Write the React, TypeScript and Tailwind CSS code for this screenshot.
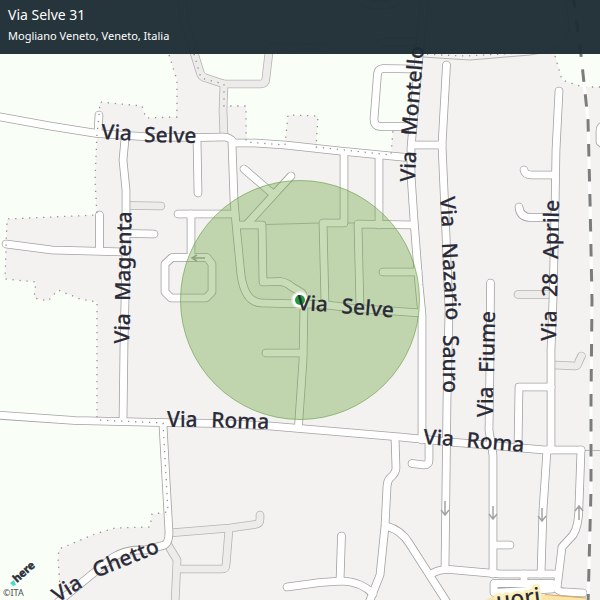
const STREETS: string[] = [
  "M-5 116L50 126L97 133.500L150 137L200 137.500L224 137Q230 137 234 143L255 143L285 145L340 151L412 158",
  "M125 139L123 160L126 190L126 250L125 300L124 345L123 421",
  "M99 115L98 133",
  "M197 138L198 193",
  "M6 244L52 250L125 252",
  "M99.500 215V250",
  "M130 233.500L154 234",
  "M178 214H235",
  "M191 214V257",
  "M191 257.500H172L165 264V292L171 298H206L212 292V264L207 257.500Z",
  "M232 143L234 200L236 224L241 275Q245 303 262 303L304 304Q325 304 350 308L421 313",
  "M244 169L273 194",
  "M291 176L248 223",
  "M238 225H262L263 282L280 281.500Q286 282 292 287L302 293Q304 296 304 304",
  "M344 153V223H323L325 304",
  "M379 157V225",
  "M414 225L358 224L360 309",
  "M383 272H418",
  "M424.500 0L420 45L411 148V175L414 220L419 285L422 315V440",
  "M446.500 65L442 145L446 235L449 310L447 400L445 569",
  "M414 145H442",
  "M414 69L383 68.500Q378 69 377.500 74L374 119Q374 126 380 126.500H413",
  "M559 91L556 150L555 210L553 300L551 350V450",
  "M524 170Q525 175 532 175H555",
  "M519 207Q520 217 530 217.500H555",
  "M551 387H519L518 447",
  "M490.500 283L490 360L489 430L493 455V574",
  "M-5 415L75 420.500L160 422.500L220 423.500L270 426L400 437L450 442L545 450H581",
  "M581 450L579 505Q579 526 573 535L562 547L557 588Q558 592 566 592L583 593",
  "M547 450L543 510L541 574",
  "M433 573Q440 569 450 569.500L500 574L558 574",
  "M395 438L396 468Q396 473 390 478Q387 481 387 487L385 526L380 575L368 605",
  "M386 526Q401 530 409 543L450 607",
  "M341.500 536L340 581",
  "M287 587L320 582.500L342 581Q362 582 373 594",
  "M429 440V460Q429 465 424 465L412 463.500",
  "M496 545H510",
  "M163 425L166 480L169 532Q169 544 163 545.500L145 550Q125 549 112 558L58 602",
  "M304 304L303 360L298.500 426",
  "M266 353H303",
  "M609 125Q600 124 600 131V142L608 148",
  "M524 574V583",
  "M494 583.500H552V589L494 592.500Z",
];

const LANES: string[] = [
  "M130 205.500L161 206",
  "M518 294.500H552",
  "M555 365L575 366Q578 366 579 361L581.500 356",
  "M169 533L230 528L255 524.500Q260 524 260 519V515",
  "M229 529L226 565Q226 569 222 569H178",
  "M168 545L177 560L175 605",
  "M182 0L184 20L200 72Q201 77 206 78L224 84H260Q266 84 266 78L269 52Q269 47 275 47L325 48",
  "M224 84L223 110L224 136",
  "M362 0Q366 5 380 5Q393 5 398 0",
  "M382 42H420L421 47",
];

const FIELDS: string[] = [
  "M0 0H170L169 55L177 80L176 117L146 118L142 106L100 102L99 115L97 134L95 180L97 215L7 219L5 279L36 282L34 298L48 301L58 290L80 299L97 302V420L163 423L168 512L152 514L150 527L115 528L95 534L59 549L58 558L60 600H0Z",
  "M186 0V30L201 77L224 84V106H246L247 142L285 145L288 115L318 116L316 147L391 155L393 130L413 128L420 55L424 0Z",
  "M555 54L562 80L583 87H600V54Z",
];

const BORDERS: string[] = [
  "M169 55L177 80V117L146 118L142 106L100 102L99 115L97 134L95 180L97 215L7 219L5 279L36 282L34 298L48 301L58 290L80 299L97 302V420L163 423L168 512L152 514L150 527L115 528L95 534L59 549L58 558L60 586",
  "M194 54L201 78L224 84V106H246V142L285 145L288 115L318 116L316 147L391 155L393 130",
  "M420 54L465 56L540 52",
  "M555 56L562 80L583 87H600",
];

const THIN_LINES = "M266 224.500L320 223M348 223H354M422 57L470 60L530 55Q568 50 569 28L566 0M580 450.500H600";
const RAILWAY = "M573 -5L581 55L588 120L590 200L592 300L591 400V490L588 605";

type Label = { word: string; x: number; y: number; angle: number };

const LABELS: Label[] = [
  { word: "Via", x: 101, y: 139, angle: 3 },
  { word: "Selve", x: 144, y: 142, angle: 1 },
  { word: "Via", x: 297, y: 310, angle: 3 },
  { word: "Selve", x: 341, y: 313, angle: 5 },
  { word: "Via", x: 167, y: 427, angle: 0 },
  { word: "Roma", x: 211, y: 427, angle: 2 },
  { word: "Via", x: 423, y: 444, angle: 4 },
  { word: "Roma", x: 466, y: 447, angle: 5 },
  { word: "Via", x: 129, y: 344, angle: -88 },
  { word: "Magenta", x: 130, y: 301, angle: -89 },
  { word: "Via", x: 415, y: 182, angle: -88 },
  { word: "Montello", x: 416, y: 136, angle: -85 },
  { word: "Via", x: 440, y: 197, angle: 86 },
  { word: "Nazario", x: 442, y: 243, angle: 87 },
  { word: "Sauro", x: 443, y: 335, angle: 90 },
  { word: "Via", x: 493, y: 417, angle: -90 },
  { word: "Fiume", x: 494, y: 373, angle: -89 },
  { word: "Via", x: 556, y: 341, angle: -89 },
  { word: "28", x: 557, y: 297, angle: -89 },
  { word: "Aprile", x: 558, y: 259, angle: -89 },
  { word: "Via", x: 58, y: 603, angle: -33 },
  { word: "Ghetto", x: 96, y: 578, angle: -22 },
];

const ARROWS = [
  "M445 501V514M441 510L445 515L449 510",
  "M493 506V518M489 514L493 519L497 514",
  "M542 508V520M538 516L542 521L546 516",
  "M579 520V507M575 511L579 506L583 511",
  "M205 258H193M197 255L192 258L197 261",
];

function Roads({ paths, casing, fill }: { paths: string[]; casing: string; fill: string }) {
  return (
    <g fill="none" strokeLinecap="round" strokeLinejoin="round">
      {paths.map((d) => (
        <path key={d} d={d} stroke={casing} strokeWidth={8.6} />
      ))}
      {paths.map((d) => (
        <path key={d} d={d} stroke={fill} strokeWidth={7} />
      ))}
    </g>
  );
}

function StreetMap() {
  return (
    <svg viewBox="0 0 600 600" className="block w-full" role="img" aria-label="Via Selve 31, Mogliano Veneto">
      <rect width="600" height="600" fill="#f3f2f1" />
      {FIELDS.map((d) => (
        <path key={d} d={d} fill="#f9fff6" />
      ))}
      <path d={THIN_LINES} fill="none" stroke="#a6a4a4" strokeWidth="0.8" />
      <Roads paths={LANES} casing="#b5b3b2" fill="#eeeceb" />
      <Roads paths={STREETS} casing="#a4a2a2" fill="#ffffff" />
      <path d="M482 605Q487 596 500 595.500L545 594.500L586 598V605Z" fill="#fbe5a6" />
      <path d="M545 594.500L586 598" fill="none" stroke="#d9a765" strokeWidth="1" />
      {BORDERS.map((d) => (
        <path key={d} d={d} fill="none" stroke="#958f92" strokeWidth="1.3" strokeDasharray="1.3 5.700" />
      ))}
      <path d={RAILWAY} fill="none" stroke="#ffffff" strokeWidth="3" />
      <path d={RAILWAY} fill="none" stroke="#7c7c7c" strokeWidth="3" strokeDasharray="12.500 12.500" />
      {ARROWS.map((d) => (
        <path key={d} d={d} fill="none" stroke="#a3a3a3" strokeWidth="1.500" />
      ))}
      <circle cx="300" cy="300" r="119.500" fill="#6fa642" fillOpacity="0.38" stroke="#6a9f4c" strokeOpacity="0.65" />
      <circle cx="300" cy="300" r="9" fill="#ffffff" fillOpacity="0.45" />
      <circle cx="300" cy="300" r="7.500" fill="#ffffff" />
      <circle cx="300" cy="300" r="5" fill="#1d9a3c" />
      <g
        fill="#2b2b38"
        stroke="#2b2b38"
        strokeWidth="0.2"
        className="font-['Noto_Sans',sans-serif] text-[21px] font-medium"
      >
        {LABELS.map(({ word, x, y, angle }) => (
          <text key={`${word}-${x}-${y}`} x={x} y={y} transform={`rotate(${angle} ${x} ${y})`}>
            {word}
          </text>
        ))}
      </g>
      <text
        x="497"
        y="609"
        transform="rotate(-7 497 609)"
        fill="#2b2b38"
        stroke="#fdf0bf"
        strokeWidth="6"
        strokeLinejoin="round"
        paintOrder="stroke"
        className="font-['Noto_Sans',sans-serif] text-[23px] font-medium"
      >
        uori
      </text>
      <path d="M10 583L14 580L16 585L13 586Z" fill="#48dad0" />
      <text
        x="17"
        y="583"
        transform="rotate(-42 17 583)"
        fill="#2d3038"
        stroke="#2d3038"
        strokeWidth="0.5"
        className="font-['Noto_Sans',sans-serif] text-[11px] font-bold"
      >
        here
      </text>
      <text x="3" y="596" fill="#4b4f52" className="font-['Noto_Sans',sans-serif] text-[9px]">
        ©ITA
      </text>
    </svg>
  );
}

export default function App() {
  return (
    <main className="relative overflow-hidden font-['Noto_Sans',sans-serif]">
      <StreetMap />
      <header className="absolute inset-x-0 top-0 bg-[#1d2c33]/96 px-2 pt-1 pb-2 text-white">
        <h1 className="text-sm leading-[22px]">Via Selve 31</h1>
        <p className="text-[11px] leading-5">Mogliano Veneto, Veneto, Italia</p>
      </header>
    </main>
  );
}
